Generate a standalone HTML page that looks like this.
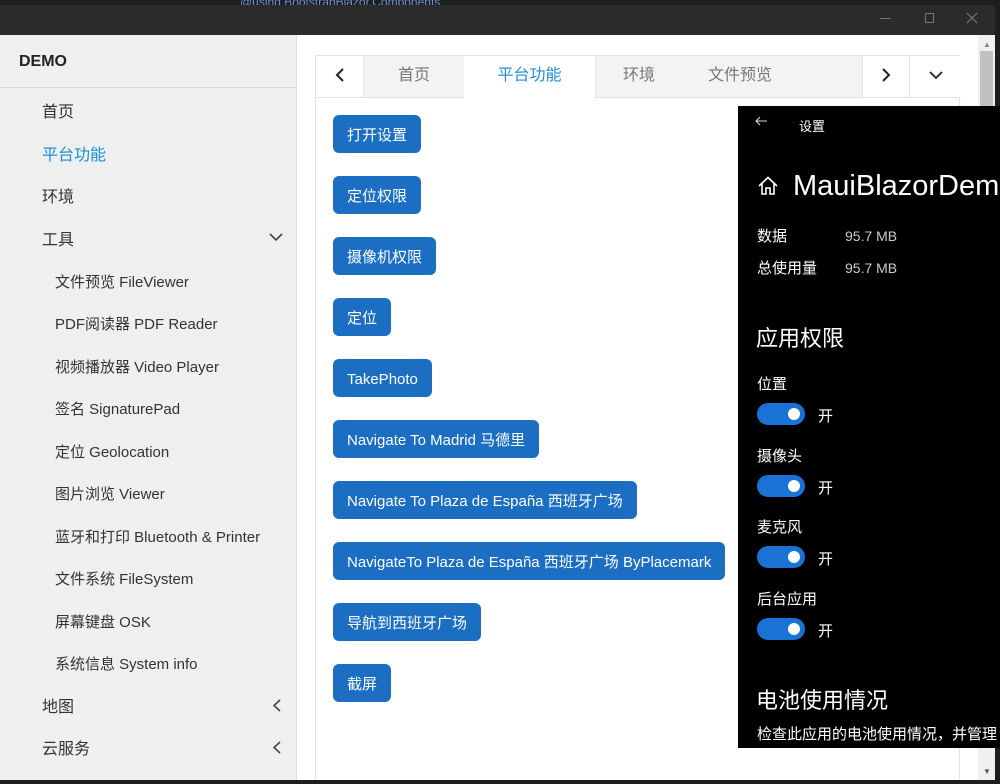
<!DOCTYPE html>
<html><head><meta charset="utf-8"><style>
*{box-sizing:border-box;margin:0;padding:0}
body{width:1000px;height:784px;overflow:hidden;background:#1e1e1e;font-family:"Liberation Sans","Noto Sans CJK SC",sans-serif;position:relative}
.abs{position:absolute}
#title{left:0;top:5px;width:995px;height:30px;background:#2b2b2b}
#side{left:0;top:35px;width:297px;height:745px;background:#efefef;border-right:1px solid #ddd}
#side .hd{height:53px;border-bottom:1px solid #ddd;font-weight:bold;font-size:16px;line-height:20px;padding:17px 0 0 19px;color:#222}
.it{position:absolute;left:42px;font-size:16px;line-height:20px;color:#333;white-space:nowrap;margin-top:3px}
.sub{left:55px;font-size:15px}
#main{left:297px;top:35px;width:681px;height:745px;background:#fff}
#sb{left:978px;top:35px;width:17px;height:745px;background:#f0f0f0}
#card{left:315px;top:55px;width:645px;height:725px;border:1px solid #e3e3e3;border-bottom:none;background:#fff}
.tab{position:absolute;top:0;height:42px;font-size:16px;line-height:40px;color:#777;text-align:center;background:#f2f3f5;border-bottom:1px solid #e3e3e3}
.btn{position:absolute;left:333px;height:38px;background:#1b6ec2;color:#fff;border-radius:6px;font-size:15px;line-height:36px;padding:3px 14px 0;white-space:nowrap}
#pan{left:738px;top:106px;width:262px;height:642px;background:#000;color:#fff}
#pan .t{position:absolute;white-space:nowrap;line-height:1.2;margin-top:2px}
.tog{position:absolute;left:19px;width:48px;height:22px;border-radius:11px;background:#1a73d4}
.tog::after{content:"";position:absolute;right:5px;top:5px;width:12px;height:12px;border-radius:6px;background:#fff}
</style></head><body>
<div class="abs" style="left:240px;top:0;color:#6a8fd0;font-size:12px;line-height:5px">@using BootstrapBlazor.Components</div>
<div id="title" class="abs">
<div class="abs" style="left:880px;top:13px;width:11px;height:1px;background:#777"></div>
<div class="abs" style="left:925px;top:8px;width:9px;height:10px;border:1px solid #777"></div>
<svg class="abs" style="left:966px;top:7px" width="12" height="12"><path d="M1 1L11 11M11 1L1 11" stroke="#777" stroke-width="1.2"/></svg>
</div>
<div id="side" class="abs"><div class="hd">DEMO</div>
<div class="it" style="top:65px">首页</div>
<div class="it" style="top:108px;color:#1b8fd8">平台功能</div>
<div class="it" style="top:150px">环境</div>
<div class="it" style="top:193px">工具</div>
<svg class="abs" style="left:269px;top:198px" width="14" height="9"><path d="M1 1L7 7L13 1" fill="none" stroke="#444" stroke-width="1.6"/></svg>
<div class="it sub" style="top:235px">文件预览 FileViewer</div>
<div class="it sub" style="top:277px">PDF阅读器 PDF Reader</div>
<div class="it sub" style="top:320px">视频播放器 Video Player</div>
<div class="it sub" style="top:362px">签名 SignaturePad</div>
<div class="it sub" style="top:405px">定位 Geolocation</div>
<div class="it sub" style="top:447px">图片浏览 Viewer</div>
<div class="it sub" style="top:490px">蓝牙和打印 Bluetooth &amp; Printer</div>
<div class="it sub" style="top:532px">文件系统 FileSystem</div>
<div class="it sub" style="top:575px">屏幕键盘 OSK</div>
<div class="it sub" style="top:617px">系统信息 System info</div>
<div class="it" style="top:660px">地图</div>
<div class="it" style="top:702px">云服务</div>
<svg class="abs" style="left:273px;top:664px" width="8" height="13"><path d="M7 1L1 6.5L7 12" fill="none" stroke="#444" stroke-width="1.6"/></svg>
<svg class="abs" style="left:273px;top:706px" width="8" height="13"><path d="M7 1L1 6.5L7 12" fill="none" stroke="#444" stroke-width="1.6"/></svg>
</div>
<div id="main" class="abs"></div>
<div id="sb" class="abs"><div class="abs" style="left:2px;top:16px;width:13px;height:690px;background:#c1c1c1"></div>
<div class="abs" style="left:5px;top:5px;font-size:8px;color:#888">▲</div><div class="abs" style="left:5px;top:732px;font-size:8px;color:#555">▼</div></div>
<div id="card" class="abs">
<div class="tab" style="left:0;width:47px;background:#fff"><svg style="margin-top:12px" width="9" height="14"><path d="M8 1L2 7L8 13" fill="none" stroke="#222" stroke-width="2"/></svg></div>
<div class="tab" style="left:47px;width:101px;border-left:1px solid #e3e3e3">首页</div>
<div class="tab" style="left:148px;width:131px;background:#fff;color:#1b8fd8;border-bottom:none">平台功能</div>
<div class="tab" style="left:279px;width:267px;text-align:left;padding-left:27px;border-left:1px solid #e3e3e3">环境<span style="margin-left:53px">文件预览</span></div>
<div class="tab" style="left:546px;width:47px;background:#fff;border-left:1px solid #e3e3e3"><svg style="margin-top:12px" width="9" height="14"><path d="M1 1L7 7L1 13" fill="none" stroke="#222" stroke-width="2"/></svg></div>
<div class="tab" style="left:593px;width:52px;background:#fff;border-left:1px solid #e3e3e3"><svg style="margin-top:15px" width="14" height="9"><path d="M1 1L7 7L13 1" fill="none" stroke="#222" stroke-width="1.8"/></svg></div>
</div>
<div class="btn" style="top:115px">打开设置</div>
<div class="btn" style="top:176px">定位权限</div>
<div class="btn" style="top:237px">摄像机权限</div>
<div class="btn" style="top:298px">定位</div>
<div class="btn" style="top:359px">TakePhoto</div>
<div class="btn" style="top:420px">Navigate To Madrid 马德里</div>
<div class="btn" style="top:481px">Navigate To Plaza de España 西班牙广场</div>
<div class="btn" style="top:542px">NavigateTo Plaza de España 西班牙广场 ByPlacemark</div>
<div class="btn" style="top:603px">导航到西班牙广场</div>
<div class="btn" style="top:664px">截屏</div>
<div id="pan" class="abs">
<svg class="abs" style="left:17px;top:10px" width="13" height="10"><path d="M12 5H1M5 1L1 5L5 9" fill="none" stroke="#ddd" stroke-width="1"/></svg>
<div class="t" style="left:61px;top:11px;font-size:13px">设置</div>
<svg class="abs" style="left:20px;top:70px" width="20" height="19"><path d="M1 10L10 1.5L19 10M4 7.5V18H8V12H12V18H16V7.5" fill="none" stroke="#fff" stroke-width="1.6"/></svg>
<div class="t" style="left:55px;top:61px;font-size:29px">MauiBlazorDemo</div>
<div class="t" style="left:19px;top:120px;font-size:15px">数据</div>
<div class="t" style="left:107px;top:120px;font-size:14px;color:#ccc">95.7 MB</div>
<div class="t" style="left:19px;top:152px;font-size:15px">总使用量</div>
<div class="t" style="left:107px;top:152px;font-size:14px;color:#ccc">95.7 MB</div>
<div class="t" style="left:18px;top:218px;font-size:22px">应用权限</div>
<div class="t" style="left:19px;top:268px;font-size:15px">位置</div>
<div class="tog" style="top:297px"></div><div class="t" style="left:80px;top:300px;font-size:15px">开</div>
<div class="t" style="left:19px;top:340px;font-size:15px">摄像头</div>
<div class="tog" style="top:369px"></div><div class="t" style="left:80px;top:372px;font-size:15px">开</div>
<div class="t" style="left:19px;top:411px;font-size:15px">麦克风</div>
<div class="tog" style="top:440px"></div><div class="t" style="left:80px;top:443px;font-size:15px">开</div>
<div class="t" style="left:19px;top:483px;font-size:15px">后台应用</div>
<div class="tog" style="top:512px"></div><div class="t" style="left:80px;top:515px;font-size:15px">开</div>
<div class="t" style="left:18px;top:580px;font-size:22px">电池使用情况</div>
<div class="t" style="left:19px;top:618px;font-size:15px">检查此应用的电池使用情况，并管理</div>
</div>
</body></html>
